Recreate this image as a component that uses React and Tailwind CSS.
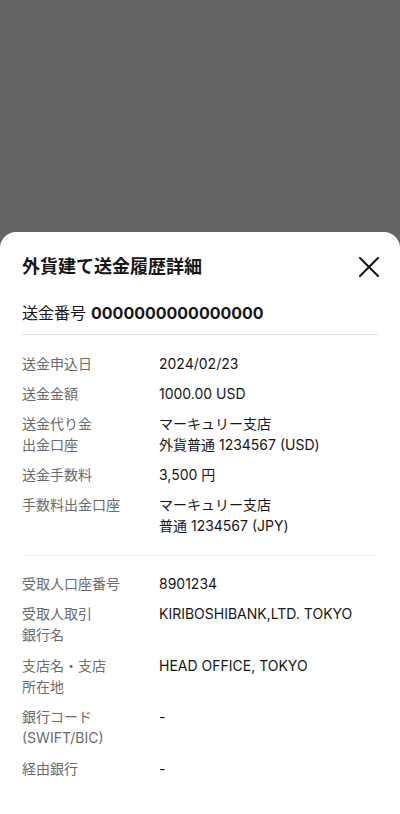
const font = { fontFamily: 'Inter, "Noto Sans CJK JP", sans-serif' };

const section1 = [
  { label: ['送金申込日'], value: ['2024/02/23'] },
  { label: ['送金金額'], value: ['1000.00 USD'] },
  { label: ['送金代り金', '出金口座'], value: ['マーキュリー支店', '外貨普通 1234567 (USD)'] },
  { label: ['送金手数料'], value: ['3,500 円'] },
  { label: ['手数料出金口座'], value: ['マーキュリー支店', '普通 1234567 (JPY)'] },
];

const section2 = [
  { label: ['受取人口座番号'], value: ['8901234'] },
  { label: ['受取人取引', '銀行名'], value: ['KIRIBOSHIBANK,LTD. TOKYO'] },
  { label: ['支店名・支店', '所在地'], value: ['HEAD OFFICE, TOKYO'] },
  { label: ['銀行コード', '(SWIFT/BIC)'], value: ['-'] },
  { label: ['経由銀行'], value: ['-'] },
];

function Row({ label, value }) {
  return (
    <div className="flex text-[14px] leading-[21px]">
      <div className="w-[137px] shrink-0 text-[#6b6b6b]">
        {label.map((l, i) => <div key={i}>{l}</div>)}
      </div>
      <div className="flex-1 text-[#161616]">
        {value.map((v, i) => <div key={i}>{v}</div>)}
      </div>
    </div>
  );
}

export default function App() {
  return (
    <div className="w-[400px] h-[814px] bg-[#646567] flex flex-col overflow-hidden" style={font}>
      <div className="h-[232px] shrink-0" />
      <div className="flex-1 bg-white rounded-t-[16px] px-[22px]">
        {/* ヘッダー */}
        <div className="flex items-center justify-between pt-[22px]">
          <h1 className="text-[18px] leading-[26px] font-bold text-[#161616]">外貨建て送金履歴詳細</h1>
          <svg width="20" height="20" viewBox="0 0 20 20" className="mr-[-1px]">
            <path d="M1 1 L19 19 M19 1 L1 19" stroke="#111" strokeWidth="2" strokeLinecap="round" />
          </svg>
        </div>

        {/* 送金番号 */}
        <div className="mt-[21px] pb-[9px] border-b border-[#e1e5eb] flex items-center gap-[5px] text-[16px] leading-[24px] text-[#161616]">
          <span>送金番号</span>
          <span className="font-bold">0000000000000000</span>
        </div>

        <div className="flex flex-col gap-[9px] pt-[17.5px] pb-[19px] border-b border-[#eef0f3]">
          {section1.map((r, i) => <Row key={i} {...r} />)}
        </div>

        <div className="flex flex-col gap-[9.5px] pt-[17px]">
          {section2.map((r, i) => <Row key={i} {...r} />)}
        </div>
      </div>
    </div>
  );
}
